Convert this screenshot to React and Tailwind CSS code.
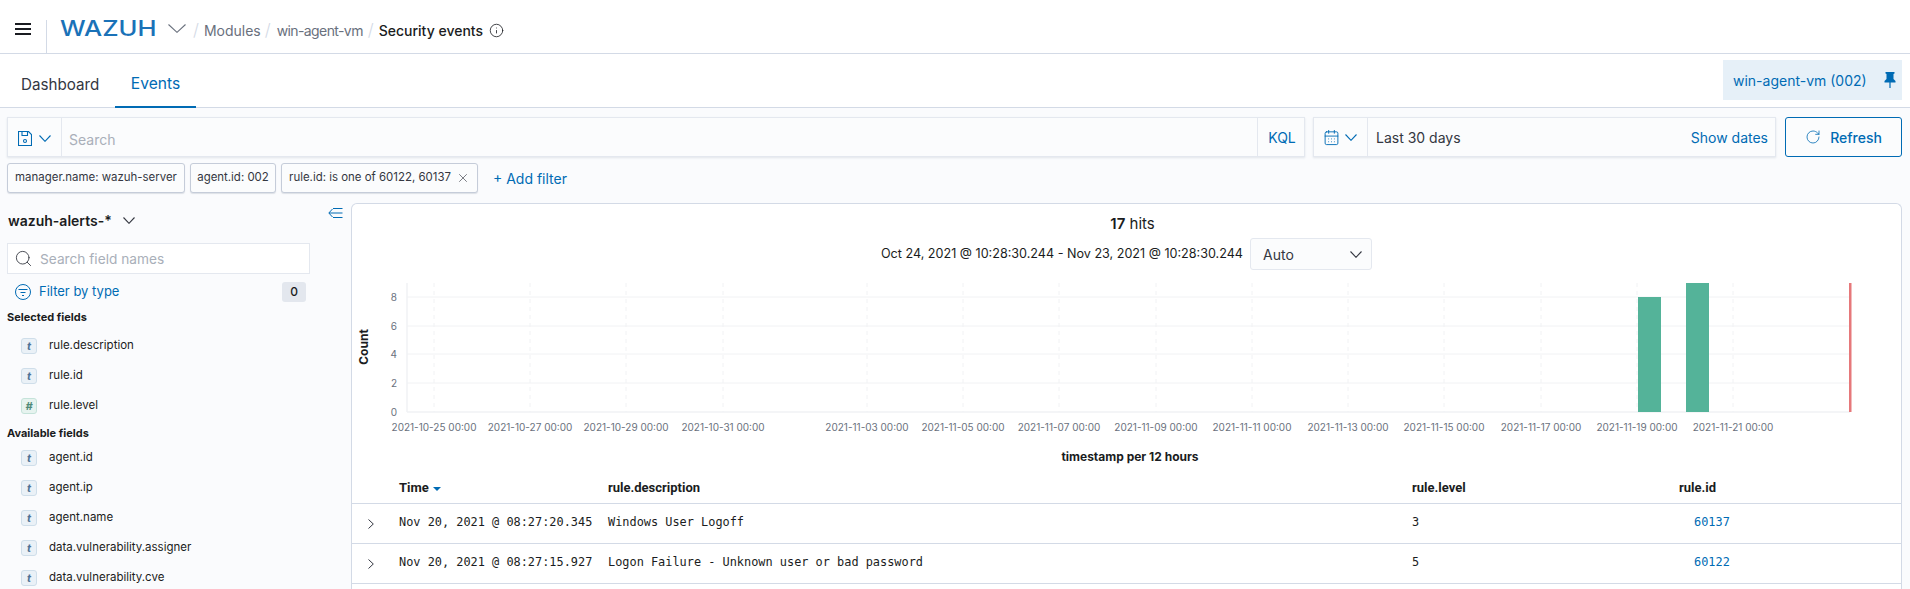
import { CalendarDays, RotateCw, Search, Info, X } from "lucide-react";

const selectedFields = [
  { type: "t", name: "rule.description" },
  { type: "t", name: "rule.id" },
  { type: "#", name: "rule.level" },
];

const availableFields = [
  { type: "t", name: "agent.id" },
  { type: "t", name: "agent.ip" },
  { type: "t", name: "agent.name" },
  { type: "t", name: "data.vulnerability.assigner" },
  { type: "t", name: "data.vulnerability.cve" },
];

const ticks = [
  [434, "2021-10-25 00:00"],
  [530, "2021-10-27 00:00"],
  [626, "2021-10-29 00:00"],
  [723, "2021-10-31 00:00"],
  [867, "2021-11-03 00:00"],
  [963, "2021-11-05 00:00"],
  [1059, "2021-11-07 00:00"],
  [1156, "2021-11-09 00:00"],
  [1252, "2021-11-11 00:00"],
  [1348, "2021-11-13 00:00"],
  [1444, "2021-11-15 00:00"],
  [1541, "2021-11-17 00:00"],
  [1637, "2021-11-19 00:00"],
  [1733, "2021-11-21 00:00"],
];

const rows = [
  { time: "Nov 20, 2021 @ 08:27:20.345", desc: "Windows User Logoff", level: "3", id: "60137" },
  { time: "Nov 20, 2021 @ 08:27:15.927", desc: "Logon Failure - Unknown user or bad password", level: "5", id: "60122" },
];

// wider than the lucide chevron, same as the one in the picture
function Chevron({ className, w = 12, h = 7 }) {
  return (
    <svg width={w} height={h} viewBox={`0 0 ${w} ${h}`} fill="none" stroke="currentColor" strokeWidth="1.100" className={className}>
      <path d={`M.5 .5 ${w / 2} ${h - 0.7} ${w - 0.5} .5`} />
    </svg>
  );
}

function FieldRow({ field }) {
  const isNum = field.type === "#";
  return (
    <div className="flex items-center h-[30px] pl-[21px]">
      <span
        className={`w-4 h-4 rounded-[3px] border flex items-center justify-center text-[11px] font-bold italic leading-none ${
          isNum
            ? "bg-[#e6f3ef] border-[#c5e3da] text-[#4f8a78]"
            : "bg-[#eaf1f7] border-[#cfdeea] text-[#4f7396]"
        }`}
      >
        {field.type}
      </span>
      <span className="ml-3 text-[11.500px] text-[#1a1c21]">{field.name}</span>
    </div>
  );
}

function Sidebar() {
  return (
    <aside className="w-[351px] shrink-0">
      <div className="flex justify-between h-[34px] pl-2 pr-[8px]">
        <div className="flex items-center">
          <span className="text-[14px] font-semibold text-[#1a1c21]">wazuh-alerts-*</span>
          <Chevron className="ml-[11px] text-[#343741]" />
        </div>
        <svg width="15" height="10" viewBox="0 0 15 10" fill="none" stroke="#006bb4" strokeWidth="1" className="mt-[5px]">
          <path d="M4.500 1 .8 5l3.700 4M1 5h13.500M5 .5h9.500M5 9.500h9.500" />
        </svg>
      </div>
      <div className="ml-[7px] mt-[6px] w-[303px] h-[31px] bg-white border border-[#e4e8ef] flex items-center pl-[6px]">
        <Search size={19} strokeWidth={1.100} className="text-[#343741]" />
        <span className="ml-[7px] pt-[1px] text-[13.700px] text-[#a9afb9]">Search field names</span>
      </div>
      <div className="flex items-center h-6 mt-[6px] pl-[15px] pr-[45px]">
        <svg width="16" height="16" viewBox="0 0 16 16" fill="none" stroke="#006bb4" strokeWidth="1">
          <circle cx="8" cy="8" r="7.500" />
          <path d="M3.500 5.500h9M5.500 8.500h5M7 11.500h2" />
        </svg>
        <span className="ml-2 text-[13px] text-[#006bb4]">Filter by type</span>
        <span className="ml-auto w-6 h-5 rounded-[3px] bg-[#e3e7ee] flex items-center justify-center text-[12px] font-medium text-[#1a1c21]">0</span>
      </div>
      <div className="mt-[5px] pl-[7px] h-4 text-[11px] leading-4 font-bold text-[#1a1c21]">Selected fields</div>
      <div className="mt-[6px]">
        {selectedFields.map((f) => (
          <FieldRow key={f.name} field={f} />
        ))}
      </div>
      <div className="mt-[4px] pl-[7px] h-4 text-[11px] leading-4 font-bold text-[#1a1c21]">Available fields</div>
      <div className="mt-[2px]">
        {availableFields.map((f) => (
          <FieldRow key={f.name} field={f} />
        ))}
      </div>
    </aside>
  );
}

function Histogram() {
  return (
    <svg viewBox="352 270 1549 194" className="block w-[1549px] h-[194px] font-['Inter',sans-serif]">
      {[297, 326, 354, 383].map((y) => (
        <line key={y} x1="407" x2="1850" y1={y} y2={y} stroke="#f1f2f4" strokeWidth="1" />
      ))}
      {ticks.map(([x]) => (
        <line key={x} x1={x} x2={x} y1="283" y2="412" stroke="#f1f2f4" strokeWidth="1" strokeDasharray="4 4" />
      ))}
      <line x1="407" x2="407" y1="283" y2="412" stroke="#f1f2f4" strokeWidth="1.500" />
      <line x1="407" x2="1850" y1="412" y2="412" stroke="#f1f2f4" strokeWidth="1.500" />
      {[[297, "8"], [326, "6"], [354, "4"], [383, "2"], [412, "0"]].map(([y, t]) => (
        <text key={t} x="397" y={y + 4} textAnchor="end" fontSize="10" fill="#6a717d">
          {t}
        </text>
      ))}
      {ticks.map(([x, t]) => (
        <text key={t} x={x} y="431" textAnchor="middle" fontSize="10" fill="#6a717d">
          {t}
        </text>
      ))}
      <rect x="1638" y="297" width="23" height="115" fill="#54b399" />
      <rect x="1686" y="283" width="23" height="129" fill="#54b399" />
      <rect x="1849" y="283" width="2.500" height="129" fill="#e6787a" />
      <text transform="translate(368 347) rotate(-90)" textAnchor="middle" fontSize="12" fontWeight="700" fill="#1a1c21">
        Count
      </text>
      <text x="1130" y="461" textAnchor="middle" fontSize="12" fontWeight="700" fill="#1a1c21">
        timestamp per 12 hours
      </text>
    </svg>
  );
}

function ResultsTable() {
  const cols = "grid grid-cols-[47px_209px_804px_267px_1fr]";
  return (
    <div>
      <div className={`${cols} h-10 pt-[16px] border-b border-[#d3dae6] font-['Roboto',sans-serif] text-[13px] font-bold text-[#1a1c21] leading-4`}>
        <span />
        <span className="flex items-center self-start h-4">
          Time
          <svg width="8" height="4" viewBox="0 0 8 4" className="ml-1 mt-[2px]">
            <path d="M0 0h8L4 4z" fill="#006bb4" />
          </svg>
        </span>
        <span>rule.description</span>
        <span>rule.level</span>
        <span>rule.id</span>
      </div>
      {rows.map((r) => (
        <div key={r.id} className={`${cols} h-10 pt-[10px] border-b border-[#d3dae6] leading-4 text-[#1a1c21] font-['DejaVu_Sans_Mono',monospace] text-[11.900px]`}>
          <span className="pl-[16px] pt-[5px]">
            <svg width="6" height="10" viewBox="0 0 6 10" fill="none" stroke="#343741" strokeWidth="1">
              <path d="M.5 .5 5.300 5 .5 9.500" />
            </svg>
          </span>
          <span>{r.time}</span>
          <span>{r.desc}</span>
          <span>{r.level}</span>
          <span className="pl-[15px] text-[#006bb4]">{r.id}</span>
        </div>
      ))}
    </div>
  );
}

export default function App() {
  const pill = "h-[30px] flex items-center justify-center rounded-[3px] bg-[#fbfcfd] border border-[#c5ccd9] shadow-[0_1px_1px_rgba(152,162,179,0.3)] text-[#343741]";
  const slash = "text-[17px] font-light text-[#d3dae6]";
  return (
    <div className="w-[1910px] h-[589px] overflow-hidden bg-[#fafbfd] font-['Inter',sans-serif] text-[#343741]">
      <header className="h-[54px] bg-white border-b border-[#d3dae6] flex items-center">
        <div className="w-[46px] pl-[15px] pt-[5px]">
          <svg width="16" height="12" viewBox="0 0 16 12" fill="#1a1c21" className="block">
            <rect width="16" height="2" />
            <rect y="5" width="16" height="2" />
            <rect y="10" width="16" height="2" />
          </svg>
        </div>
        <div className="self-end w-px h-[33px] bg-[#d3dae6]" />
        <span className="ml-[13px] mt-[5px] w-[98px] text-[21.500px] leading-none font-medium text-[#1a72b8] scale-x-[1.190] origin-left">WAZUH</span>
        <Chevron w={18} h={9} className="ml-[10px] mt-[4px] text-[#69707d]" />
        <nav className="ml-[7px] mt-[8px] flex items-center text-[14px]">
          <span className={slash}>/</span>
          <span className="ml-[5px] text-[#69707d]">Modules</span>
          <span className={`ml-[4px] ${slash}`}>/</span>
          <span className="ml-[6px] tracking-[-0.6px] text-[#69707d]">win-agent-vm</span>
          <span className={`ml-[5px] ${slash}`}>/</span>
          <span className="ml-[5px] font-medium text-[#1a1c21]">Security events</span>
          <Info size={15} strokeWidth={1.300} className="ml-[6px] text-[#1a1c21]" />
        </nav>
      </header>

      <div className="h-[54px] bg-white border-b border-[#d3dae6] flex items-start justify-between pr-2">
        <div className="flex h-[54px]">
          <div className="w-[94px] pl-[21px] pt-[8px] flex items-center text-[15.200px] text-[#343741]">Dashboard</div>
          <div className="ml-[21px] w-[81px] h-[54px] pt-[8px] flex items-center justify-center text-[15.600px] text-[#006bb4] border-b-2 border-[#006bb4]">Events</div>
        </div>
        <div className="mt-[6px] w-[179px] h-10 bg-[#e6f0f8] flex items-center pl-[10px] text-[14px] text-[#006bb4]">
          win-agent-vm (002)
          <svg width="12" height="16" viewBox="0 0 12 16" fill="#006bb4" className="ml-[17px]">
            <path d="M1.500 0h9v1.500L9.500 2v5l2 2v1.500H6.600V16h-1.200v-5.500H.5V9l2-2V2l-1-.5z" />
          </svg>
        </div>
      </div>

      <div className="flex pt-[9px] pl-[7px] pr-2 h-[49px]">
        <div className="flex-1 h-10 flex bg-[#fbfcfd] border border-[#e4e8ef] shadow-[0_1px_2px_rgba(152,162,179,0.25)]">
          <div className="w-[54px] flex items-center pl-[10px] pt-[2px] border-r border-[#e4e8ef] text-[#006bb4]">
            <svg width="14" height="15" viewBox="0 0 14 15" fill="none" stroke="#006bb4" strokeWidth="1.100">
              <path d="M.5.500h10l3 3v11H.5zM4 .5v4h5.500v-4" />
              <circle cx="7" cy="10" r="1.500" />
            </svg>
            <Chevron className="ml-[7px]" />
          </div>
          <span className="ml-[7px] pt-[4px] self-center text-[14px] text-[#a9afb9]">Search</span>
          <div className="ml-auto w-[47px] pl-[2px] border-l border-[#e4e8ef] flex items-center justify-center text-[14px] text-[#006bb4]">KQL</div>
        </div>
        <div className="ml-2 w-[463px] h-10 flex items-center bg-[#fbfcfd] border border-[#e4e8ef] shadow-[0_1px_2px_rgba(152,162,179,0.25)] text-[14px]">
          <div className="w-[54px] h-full flex items-center pl-[9px] border-r border-[#e4e8ef] text-[#006bb4]">
            <CalendarDays size={17} strokeWidth={1.300} />
            <Chevron className="ml-[5px]" />
          </div>
          <span className="ml-[8px] text-[#343741]">Last 30 days</span>
          <span className="ml-auto mr-[7px] text-[#006bb4]">Show dates</span>
        </div>
        <button className="ml-[9px] w-[117px] h-10 rounded-[3px] border border-[#006bb4] bg-[#fbfcfd] flex items-center justify-center text-[14px] font-medium text-[#006bb4]">
          <RotateCw size={16} strokeWidth={1.200} className="mr-[9px]" />
          Refresh
        </button>
      </div>

      <div className="flex items-center mt-[6px] h-[30px] pl-[7px] text-[11.450px]">
        <span className={`w-[178px] ${pill}`}>manager.name: wazuh-server</span>
        <span className={`ml-[5px] w-[86px] ${pill}`}>agent.id: 002</span>
        <span className={`ml-[5px] w-[197px] ${pill}`}>
          rule.id: is one of 60122, 60137
          <X size={14} strokeWidth={1.100} className="ml-[5px]" />
        </span>
        <span className="ml-[15px] text-[14px] text-[#006bb4]">+ Add filter</span>
      </div>

      <main className="flex mt-[10px]">
        <Sidebar />
        <section className="w-[1551px] h-[386px] bg-white border border-b-0 border-[#d3dae6] rounded-t-[6px]">
          <div className="h-[34px] flex items-end justify-center pl-[12px] text-[15px] leading-[20px] text-[#1a1c21]">
            <span className="mb-[4px]">
              <b className="font-semibold">17</b> hits
            </span>
          </div>
          <div className="h-[32px] flex items-center justify-center text-[12.600px] text-[#1a1c21]">
            <span>Oct 24, 2021 @ 10:28:30.244 - Nov 23, 2021 @ 10:28:30.244</span>
            <div className="ml-[7px] w-[122px] h-[32px] pl-3 pr-[9px] flex items-center justify-between rounded-[3px] border border-[#e4e8ef] bg-[#fbfcfd] text-[14px] text-[#343741]">
              Auto
              <Chevron />
            </div>
          </div>
          <Histogram />
          <ResultsTable />
        </section>
      </main>
    </div>
  );
}
